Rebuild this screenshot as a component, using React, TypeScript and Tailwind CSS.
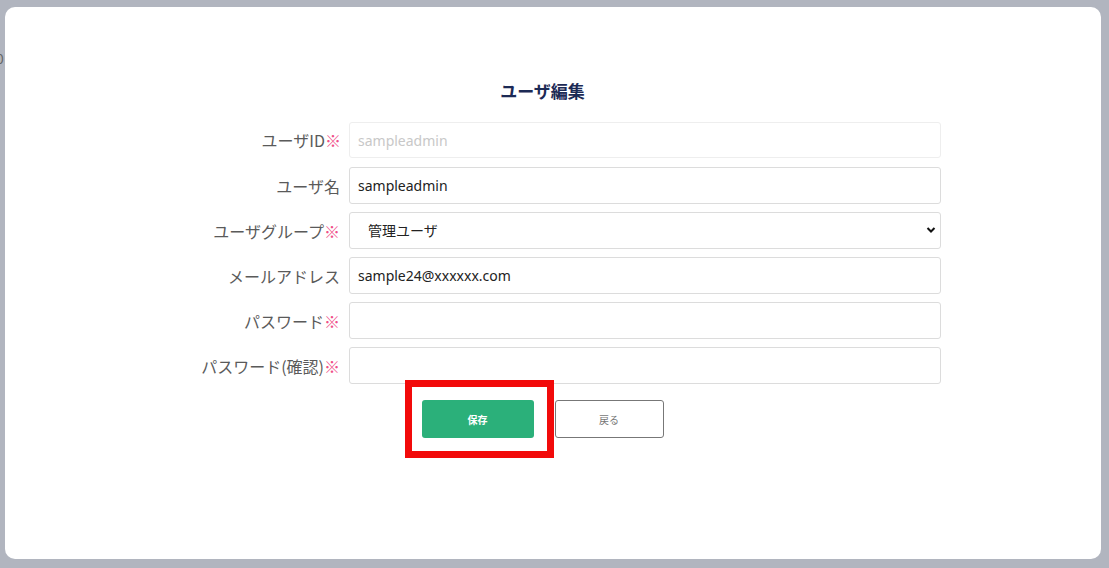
import React from "react";

const jp = { fontFamily: '"Noto Sans CJK JP", "Noto Sans", sans-serif' };
const latin = { fontFamily: '"Noto Sans", "Noto Sans CJK JP", sans-serif' };

function Req() {
  return <span className="text-[#f0508a]">※</span>;
}

function Row({ label, req, children }: { label: string; req?: boolean; children: React.ReactNode }) {
  return (
    <div className="flex items-center h-[37px] mb-[8px]">
      <div className="w-[197px] pr-[1px] text-right text-[16px] text-[#5a5a5a] leading-none whitespace-nowrap">
        {label}
        {req && <Req />}
      </div>
      <div className="ml-[8px] w-[592px] h-full">{children}</div>
    </div>
  );
}

export default function App() {
  return (
    <div className="relative w-[1109px] h-[568px] bg-[#b1b5bf] overflow-hidden" style={jp}>
      <div className="absolute left-[-4px] top-[48px] text-[14px] text-[#666]">0</div>
      <div className="absolute left-[5px] top-[7px] w-[1096px] h-[552px] bg-white rounded-[10px]">
        <div className="ml-[139px] w-[797px] pt-[71px]">
          <h1 className="text-center text-[17px] font-bold text-[#1c2a55] leading-[26px] mb-[18px]">ユーザ編集</h1>
          <div>
            <div className="flex items-center h-[36px] mb-[9px]">
              <div className="w-[197px] text-right text-[16px] text-[#5a5a5a] leading-none whitespace-nowrap">
                ユーザID<Req />
              </div>
              <div className="ml-[8px] w-[592px] h-full">
                <input
                  disabled
                  placeholder="sampleadmin"
                  style={latin}
                  className="w-full h-full border border-[#eeeeee] rounded-[3px] px-[8px] text-[14px] bg-white placeholder:text-[#c8c8c8]"
                />
              </div>
            </div>
            <Row label="ユーザ名">
              <input
                defaultValue="sampleadmin"
                style={latin}
                className="w-full h-full border border-[#dcdcdc] rounded-[3px] px-[8px] text-[14px] text-[#222] outline-none"
              />
            </Row>
            <Row label="ユーザグループ" req>
              <div className="relative w-full h-full border border-[#dcdcdc] rounded-[3px] flex items-center pl-[18px] text-[14px] text-[#222]">
                管理ユーザ
                <svg className="absolute right-[4px] top-[13px]" width="10" height="8" viewBox="0 0 10 8">
                  <path d="M1.5 2 L5 5.5 L8.5 2" fill="none" stroke="#111" strokeWidth="2" />
                </svg>
              </div>
            </Row>
            <Row label="メールアドレス">
              <input
                defaultValue="sample24@xxxxxx.com"
                style={latin}
                className="w-full h-full border border-[#dcdcdc] rounded-[3px] px-[8px] text-[14px] text-[#222] outline-none"
              />
            </Row>
            <Row label="パスワード" req>
              <input type="password" className="w-full h-full border border-[#dcdcdc] rounded-[3px] px-[8px] text-[14px] outline-none" />
            </Row>
            <Row label="パスワード(確認)" req>
              <input type="password" className="w-full h-full border border-[#dcdcdc] rounded-[3px] px-[8px] text-[14px] outline-none" />
            </Row>
          </div>
          <div className="flex justify-center mt-[16px] gap-[21px] relative">
            <div className="relative">
              <div className="absolute left-[-17px] top-[-20px] w-[149px] h-[78px] border-[7px] border-[#f20a0a]"></div>
              <button className="w-[112px] h-[38px] bg-[#2bb07a] rounded-[3px] text-white text-[10px] font-bold">保存</button>
            </div>
            <button className="w-[109px] h-[38px] bg-white border border-[#777] rounded-[3px] text-[#777] text-[10px]">戻る</button>
          </div>
        </div>
      </div>
    </div>
  );
}
